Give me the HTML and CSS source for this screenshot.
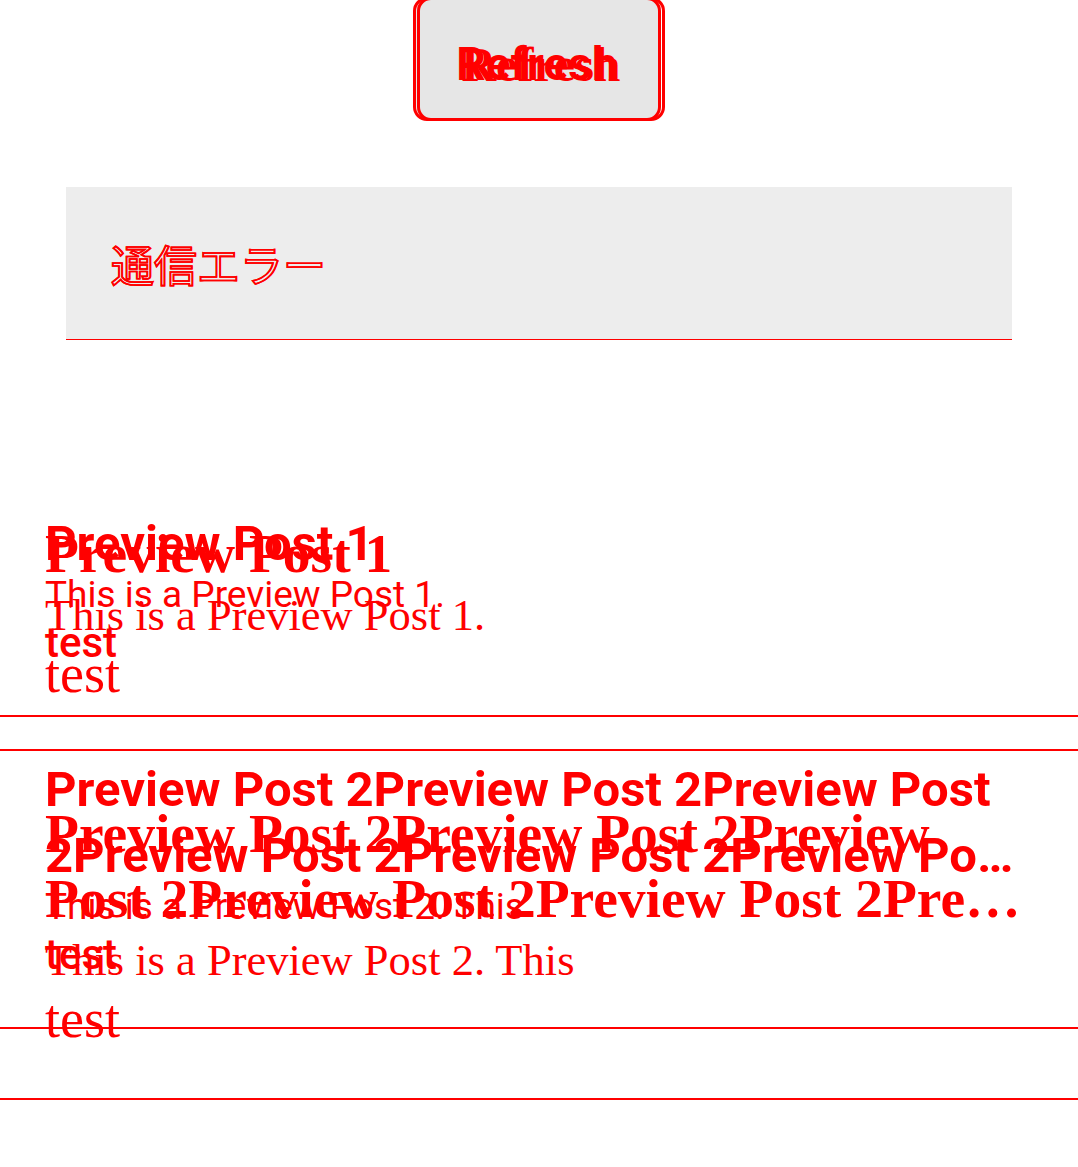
FILE: index.html
```html
<!DOCTYPE html>
<html lang="ja">
<head>
<meta charset="utf-8">
<title>Preview Posts</title>
<link rel="stylesheet" href="styles.css">
</head>
<body>
<div class="stack">
  <div class="layer layer-sans">
    <div class="toolbar"><button class="refresh">Refresh</button></div>
    <div class="error"><span class="error-text">通信エラー</span></div>
    <ul class="posts">
      <li class="post">
        <h2 class="title">Preview Post 1</h2>
        <p class="body">This is a Preview Post 1.</p>
        <p class="tag">test</p>
      </li>
      <li class="post">
        <h2 class="title"><span class="line">Preview Post 2Preview Post 2Preview Post</span><span class="line line-last">2Preview Post 2Preview Post 2Preview Post 2Preview Post 2Preview Post 2</span></h2>
        <p class="body">This is a Preview Post 2. This</p>
        <p class="tag">test</p>
      </li>
    </ul>
  </div>
  <div class="layer layer-serif" aria-hidden="true">
    <div class="toolbar"><button class="refresh" tabindex="-1">Refresh</button></div>
    <div class="error"><span class="error-text">通信エラー</span></div>
    <ul class="posts">
      <li class="post">
        <h2 class="title">Preview Post 1</h2>
        <p class="body">This is a Preview Post 1.</p>
        <p class="tag">test</p>
      </li>
      <li class="post">
        <h2 class="title"><span class="line">Preview Post 2Preview Post 2Preview</span><span class="line line-last">Post 2Preview Post 2Preview Post 2Preview Post 2Preview Post 2Preview Post 2</span></h2>
        <p class="body">This is a Preview Post 2. This</p>
        <p class="tag">test</p>
      </li>
    </ul>
  </div>
</div>
</body>
</html>
```

FILE: styles.css
```css
html, body {
  margin: 0;
  padding: 0;
  background: #ffffff;
}

body {
  color: #ff0000;
  overflow: hidden;
}

.stack {
  display: grid;
  width: 1078px;
}

.layer {
  grid-area: 1 / 1;
  min-width: 0;
}

.toolbar {
  display: flex;
  justify-content: center;
  margin-top: -3px;
}

.refresh {
  width: 248px;
  height: 124px;
  box-sizing: border-box;
  border: 3px solid #ff0000;
  border-radius: 14px;
  padding: 10px 0 0;
  color: #ff0000;
  font-weight: 700;
  cursor: pointer;
}

.error {
  height: 153px;
  box-sizing: border-box;
  margin: 66px 66px 0;
  border-bottom: 1px solid #ff0000;
  display: flex;
  align-items: center;
  padding-left: 45px;
}

.error-text {
  font-family: "Noto Sans CJK JP", sans-serif;
  font-size: 43px;
  line-height: 1;
  color: transparent;
  -webkit-text-stroke: 1.6px #ff0000;
}

.posts {
  list-style: none;
  margin: 131px 0 0;
  padding: 0;
}

.post {
  border-bottom: 2px solid #ff0000;
}

.title {
  margin: 0;
  font-weight: 700;
}

.line {
  display: block;
}

.line-last {
  white-space: nowrap;
  overflow: hidden;
  text-overflow: ellipsis;
}

.body {
  margin: 0;
  font-weight: 400;
}

.tag {
  margin: 10px 0 0;
}

/* sans layer */
.layer-sans {
  font-family: Roboto, "Noto Sans CJK JP", sans-serif;
}

.layer-sans .refresh {
  background: #e6e6e6;
  font-family: Roboto, sans-serif;
  font-size: 46px;
  margin-right: 4px;
}

.layer-sans .error {
  background: #ededed;
}

.layer-sans .post {
  padding: 40px 45px 52px;
}

.layer-sans .title {
  font-size: 49px;
  line-height: 66px;
}

.layer-sans .body {
  font-size: 37px;
  line-height: 36px;
}

.layer-sans .tag {
  font-size: 42px;
  line-height: 40px;
  font-weight: 500;
}

/* serif layer */
.layer-serif {
  font-family: "Liberation Serif", "Noto Sans CJK JP", serif;
}

.layer-serif .refresh {
  background: transparent;
  font-family: "Liberation Serif", serif;
  font-size: 48px;
  margin-left: 4px;
}

.layer-serif .error {
  background: transparent;
}

.layer-serif .post {
  padding: 50px 45px 48px;
}

.layer-serif .post:last-child {
  padding-bottom: 52px;
}

.layer-serif .title {
  font-size: 55.5px;
  line-height: 65px;
}

.layer-serif .body {
  font-size: 44.5px;
  line-height: 44px;
  margin-top: 7px;
}

.layer-serif .tag {
  font-size: 54px;
  line-height: 54px;
}
```
